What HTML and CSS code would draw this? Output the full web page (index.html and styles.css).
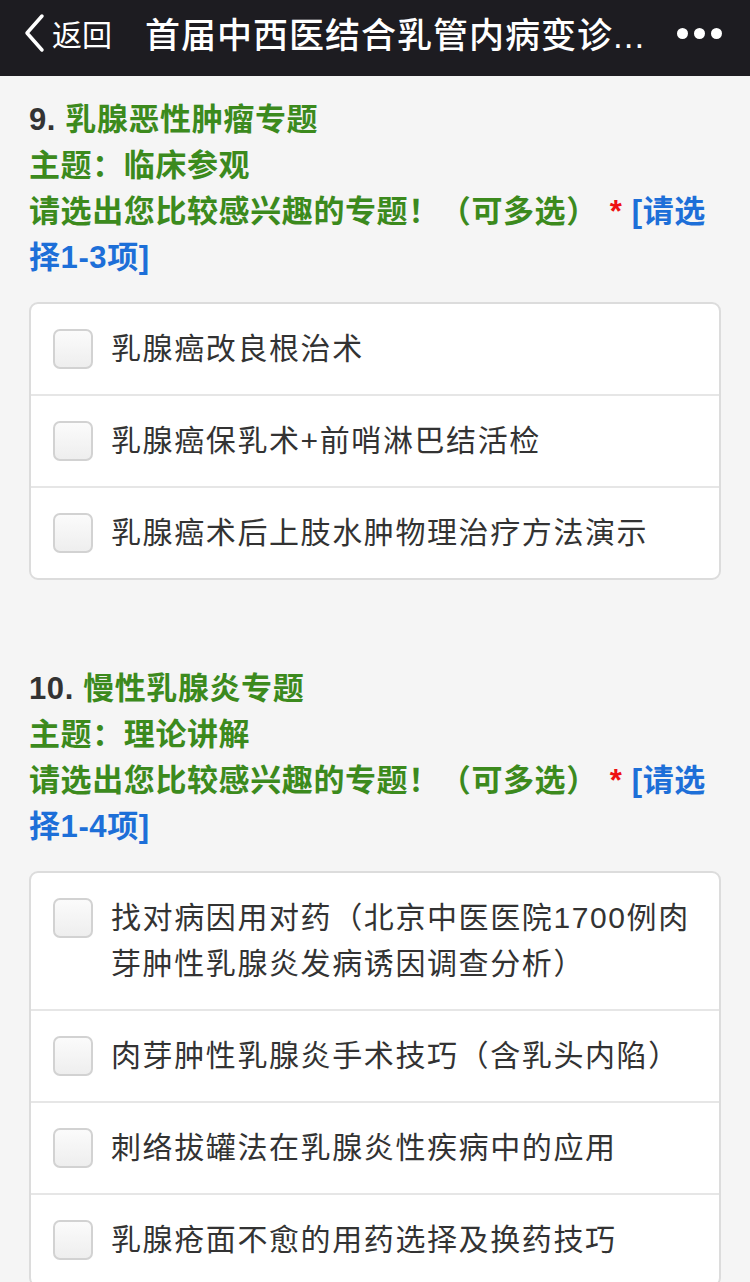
FILE: index.html
```html
<!DOCTYPE html>
<html lang="zh-CN">
<head>
  <meta charset="UTF-8">
  <meta name="viewport" content="width=device-width, initial-scale=1.0">
  <title>首届中西医结合乳管内病变诊断</title>
  <link rel="stylesheet" href="styles.css">
</head>
<body>
  <header class="navbar">
    <div class="back">
      <svg class="chevron" width="24" height="40" viewBox="0 0 24 40"><polyline points="20,3 5,20 20,37" fill="none" stroke="#fff" stroke-width="3.5" stroke-linecap="round" stroke-linejoin="round"/></svg>
      <span>返回</span>
    </div>
    <h1 class="title">首届中西医结合乳管内病变诊...</h1>
    <div class="more"><i></i><i></i><i></i></div>
  </header>

  <main class="survey">
    <section class="question">
      <div class="q-head">
        <p><b class="num">9.</b> <span class="green">乳腺恶性肿瘤专题</span></p>
        <p class="green">主题：临床参观</p>
        <p><span class="green">请选出您比较感兴趣的专题！（可多选）</span><span class="req">*</span> <span class="hint">[请选择1-3项]</span></p>
      </div>
      <ul class="options">
        <li><span class="box"></span><span class="label">乳腺癌改良根治术</span></li>
        <li><span class="box"></span><span class="label">乳腺癌保乳术+前哨淋巴结活检</span></li>
        <li><span class="box"></span><span class="label">乳腺癌术后上肢水肿物理治疗方法演示</span></li>
      </ul>
    </section>

    <section class="question">
      <div class="q-head">
        <p><b class="num">10.</b> <span class="green">慢性乳腺炎专题</span></p>
        <p class="green">主题：理论讲解</p>
        <p><span class="green">请选出您比较感兴趣的专题！（可多选）</span><span class="req">*</span> <span class="hint">[请选择1-4项]</span></p>
      </div>
      <ul class="options">
        <li><span class="box"></span><span class="label">找对病因用对药（北京中医医院1700例肉芽肿性乳腺炎发病诱因调查分析）</span></li>
        <li><span class="box"></span><span class="label">肉芽肿性乳腺炎手术技巧（含乳头内陷）</span></li>
        <li><span class="box"></span><span class="label">刺络拔罐法在乳腺炎性疾病中的应用</span></li>
        <li><span class="box"></span><span class="label">乳腺疮面不愈的用药选择及换药技巧</span></li>
      </ul>
    </section>
  </main>
</body>
</html>
```

FILE: styles.css
```css
body {
  margin: 0;
  background: #f5f5f5;
  font-family: "Liberation Sans", "Noto Sans CJK SC", sans-serif;
  color: #333;
}
.navbar {
  height: 76px;
  background: #1d1c21;
  color: #fff;
  display: flex;
  align-items: center;
  padding: 0 22px;
  box-sizing: border-box;
}
.back {
  display: flex;
  align-items: center;
  gap: 6px;
  font-size: 30px;
  margin-top: -10px;
}
.chevron { display: block; }
.title {
  margin: -12px 0 0 33px;
  font-size: 35px;
  font-weight: 500;
  letter-spacing: 1px;
  white-space: nowrap;
  flex: 1;
}
.more {
  display: flex;
  gap: 6px;
  margin-top: -10px;
  margin-right: 6px;
}
.more i {
  width: 11px;
  height: 11px;
  border-radius: 50%;
  background: #fff;
}
.survey { padding: 0 29px; }
.question { padding-top: 21px; margin-bottom: 65px; }
.q-head p {
  margin: 0;
  font-size: 31px;
  font-weight: bold;
  line-height: 46px;
  letter-spacing: 0.6px;
}
.num { color: #333; }
.green { color: #3c8a1d; }
.req { color: #e11; margin-left: 12px; }
.hint { color: #1d6fd8; }
.options {
  list-style: none;
  margin: 21px 0 0;
  padding: 0;
  background: #fff;
  border: 2px solid #dcdcdc;
  border-radius: 9px;
}
.options li {
  display: flex;
  align-items: flex-start;
  padding: 22px 24px 22px 22px;
  border-top: 2px solid #e6e6e6;
}
.options li:first-child { border-top: none; }
.box {
  flex: none;
  width: 36px;
  height: 36px;
  margin-top: 3px;
  border: 2px solid #d2d2d2;
  border-radius: 7px;
  background: linear-gradient(#fbfbfb, #eeeeee);
}
.label {
  margin-left: 18px;
  font-size: 30px;
  letter-spacing: 1.6px;
  line-height: 46px;
  color: #333;
}
```
